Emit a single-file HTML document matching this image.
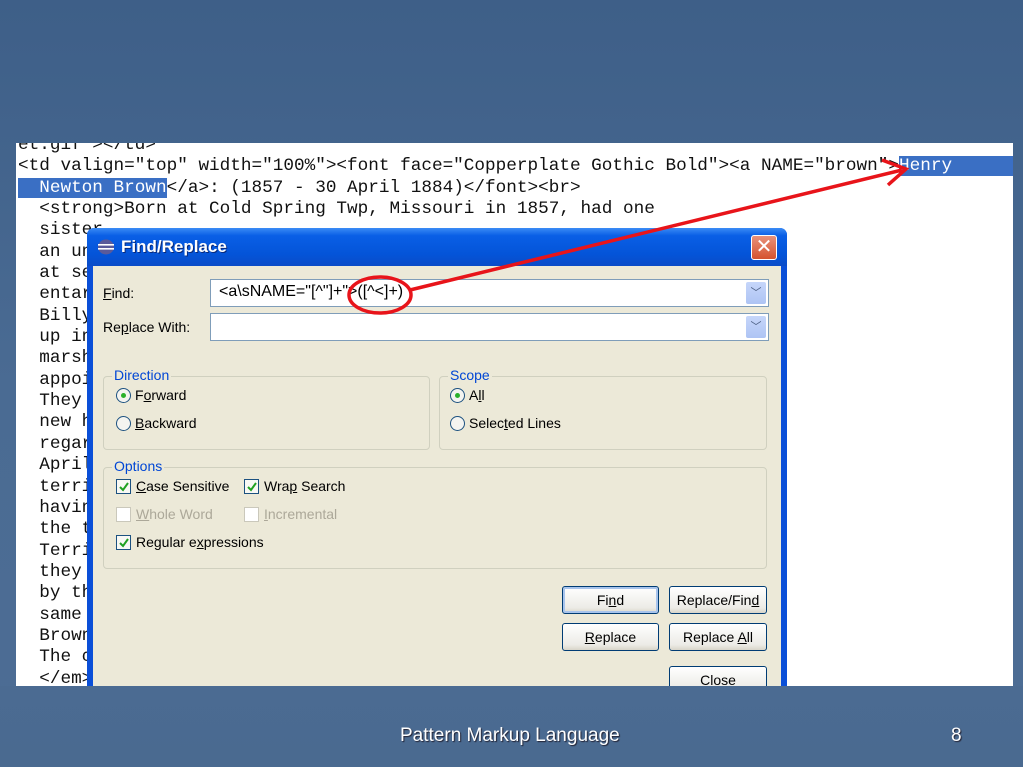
<!DOCTYPE html>
<html><head><meta charset="utf-8"><style>
*{margin:0;padding:0;box-sizing:border-box}
body{width:1023px;height:767px;overflow:hidden;position:relative;background:linear-gradient(180deg,#3e5f88 0%,#4a6b93 50%,#4d6d94 100%);font-family:"Liberation Sans",sans-serif}
.shot{position:absolute;left:16px;top:143px;width:997px;height:543px;background:#fff;overflow:hidden}
.code{position:absolute;left:2px;top:-8px;font-family:"Liberation Mono",monospace;font-size:17.7px;line-height:21.35px;white-space:pre;color:#111;letter-spacing:0}
.sel{background:#3a6fc4;color:#fff}
.dlg{position:absolute;left:87px;top:228px;width:700px;height:470px;background:#0a4fd8;border-radius:7px 7px 0 0}
.tb{position:absolute;left:0;top:0;width:700px;height:38px;border-radius:7px 7px 0 0;background:linear-gradient(180deg,#3b8cf5 0%,#0a5fe6 20%,#0454d8 70%,#0a4cc8 100%)}
.tb span{position:absolute;left:34px;top:9px;color:#fff;font-weight:bold;font-size:17px;text-shadow:1px 1px #0a2a7a}
.body{position:absolute;left:6px;top:38px;width:688px;height:440px;background:#ece9d8;font-size:14px;color:#000}
.lbl{position:absolute}
.inp{position:absolute;background:#fff;border:1px solid #7f9db9;height:28px}
.dd{position:absolute;right:2px;top:2px;width:20px;height:22px;background:linear-gradient(#c6d6fa,#aec4f4);border-radius:2px;color:#4d6185;font-size:11px;text-align:center;line-height:22px}
.grp{position:absolute;border:1px solid #d0d0bf;border-radius:4px}
.gt{position:absolute;top:-10px;left:8px;background:#ece9d8;color:#0046d5;padding:0 2px;font-size:14px}
.rad{position:absolute;width:15px;height:15px;border:1px solid #1c5180;border-radius:50%;background:#f4f4f0}
.rad.on::after{content:"";position:absolute;left:4px;top:4px;width:5px;height:5px;border-radius:50%;background:#2bb12b}
.cb{position:absolute;width:15px;height:15px;border:1px solid #1c5180;background:#f8f8f4}
.cb.dis{border-color:#cac8bb;background:#fff}
.cb svg{position:absolute;left:1px;top:1px}
.btn{position:absolute;height:28px;border:1px solid #003c74;border-radius:3px;background:linear-gradient(#fff,#ecebe6 80%,#d8d5c9);text-align:center;line-height:26px;font-size:14px}
u{text-decoration:underline}
.foot{position:absolute;top:725px;color:#fff;font-size:19px;text-shadow:1px 1px 1px #223}
</style></head><body>
<div class="shot"><div class="code">et.gif"&gt;&lt;/td&gt;
&lt;td valign="top" width="100%"&gt;&lt;font face="Copperplate Gothic Bold"&gt;&lt;a NAME="brown"&gt;<span class="sel">Henry          </span>
<span class="sel">  Newton Brown</span>&lt;/a&gt;: (1857 - 30 April 1884)&lt;/font&gt;&lt;br&gt;
  &lt;strong&gt;Born at Cold Spring Twp, Missouri in 1857, had one
  sister
  an un
  at se
  entar
  Billy
  up in
  marsh
  appoi
  They 
  new h
  regar
  April
  terri
  havin
  the t
  Terri
  they 
  by th
  same 
  Brown
  The c
  &lt;/em&gt;</div></div>

<div class="dlg">
 <div class="tb">
  <svg style="position:absolute;left:10px;top:11px" width="18" height="16"><ellipse cx="9" cy="8" rx="8" ry="7.5" fill="#5a5a9a"/><rect x="1" y="5" width="16" height="1.6" fill="#fff"/><rect x="1" y="9" width="16" height="1.6" fill="#fff"/></svg>
  <span>Find/Replace</span>
  <div style="position:absolute;left:664px;top:7px;width:26px;height:25px;border:1px solid #fff;border-radius:3px;background:linear-gradient(#e8917a,#d5532f);color:#fff;font-size:20px;text-align:center;line-height:22px">✕</div>
 </div>
 <div class="body">
  <div class="lbl" style="left:10px;top:19px"><u>F</u>ind:</div>
  <div class="inp" style="left:117px;top:13px;width:559px"><span style="position:absolute;left:8px;top:3px;font-size:16px">&lt;a\sNAME="[^"]+"&gt;([^&lt;]+)</span><div class="dd">﹀</div></div>
  <div class="lbl" style="left:10px;top:53px">Re<u>p</u>lace With:</div>
  <div class="inp" style="left:117px;top:47px;width:559px"><div class="dd">﹀</div></div>

  <div class="grp" style="left:10px;top:110px;width:327px;height:74px"><div class="gt">Direction</div></div>
  <div class="rad on" style="left:23px;top:122px"></div><div class="lbl" style="left:42px;top:121px">F<u>o</u>rward</div>
  <div class="rad" style="left:23px;top:150px"></div><div class="lbl" style="left:42px;top:149px"><u>B</u>ackward</div>

  <div class="grp" style="left:346px;top:110px;width:328px;height:74px"><div class="gt">Scope</div></div>
  <div class="rad on" style="left:357px;top:122px"></div><div class="lbl" style="left:376px;top:121px">A<u>l</u>l</div>
  <div class="rad" style="left:357px;top:150px"></div><div class="lbl" style="left:376px;top:149px">Selec<u>t</u>ed Lines</div>

  <div class="grp" style="left:10px;top:201px;width:664px;height:102px"><div class="gt">Options</div></div>
  <div class="cb" style="left:23px;top:213px"><svg width="12" height="12"><path d="M2 6 L5 9 L10 2" stroke="#21a121" stroke-width="2" fill="none"/></svg></div><div class="lbl" style="left:43px;top:212px"><u>C</u>ase Sensitive</div>
  <div class="cb" style="left:151px;top:213px"><svg width="12" height="12"><path d="M2 6 L5 9 L10 2" stroke="#21a121" stroke-width="2" fill="none"/></svg></div><div class="lbl" style="left:171px;top:212px">Wra<u>p</u> Search</div>
  <div class="cb dis" style="left:23px;top:241px"></div><div class="lbl" style="left:43px;top:240px;color:#aca899"><u>W</u>hole Word</div>
  <div class="cb dis" style="left:151px;top:241px"></div><div class="lbl" style="left:171px;top:240px;color:#aca899"><u>I</u>ncremental</div>
  <div class="cb" style="left:23px;top:269px"><svg width="12" height="12"><path d="M2 6 L5 9 L10 2" stroke="#21a121" stroke-width="2" fill="none"/></svg></div><div class="lbl" style="left:43px;top:268px">Regular e<u>x</u>pressions</div>

  <div class="btn" style="left:469px;top:320px;width:97px;box-shadow:inset 0 0 0 2px #a8c4ec">Fi<u>n</u>d</div>
  <div class="btn" style="left:576px;top:320px;width:98px">Replace/Fin<u>d</u></div>
  <div class="btn" style="left:469px;top:357px;width:97px"><u>R</u>eplace</div>
  <div class="btn" style="left:576px;top:357px;width:98px">Replace <u>A</u>ll</div>
  <div class="btn" style="left:576px;top:400px;width:98px">Close</div>
 </div>
</div>
<div style="position:absolute;left:0;top:686px;width:1023px;height:81px;background:linear-gradient(#4b6b92,#4a6a90)"></div>

<svg style="position:absolute;left:0;top:0" width="1023" height="767">
 <line x1="410" y1="290" x2="902" y2="170" stroke="#e8141a" stroke-width="3.5"/>
 <path d="M882 160 L906 169 L888 185" stroke="#e8141a" stroke-width="3.5" fill="none"/>
 <ellipse cx="380" cy="295" rx="31" ry="18" stroke="#e8141a" stroke-width="3.5" fill="none"/>
</svg>

<div class="foot" style="left:400px">Pattern Markup Language</div>
<div class="foot" style="left:951px">8</div>
</body></html>
